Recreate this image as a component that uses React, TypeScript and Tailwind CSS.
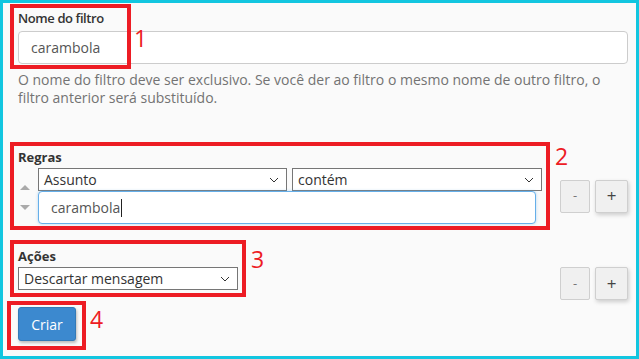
import React from "react";

const font = { fontFamily: '"Open Sans", "Noto Sans", sans-serif' };

function Chevron() {
  return (
    <svg width="10" height="6" viewBox="0 0 10 6" className="shrink-0">
      <path d="M1 1l4 4 4-4" fill="none" stroke="#333" strokeWidth="1" />
    </svg>
  );
}

function FakeSelect({ label, className }: { label: string; className: string }) {
  return (
    <div
      className={`flex h-[23px] items-center justify-between border border-[#767676] bg-white pl-[5px] pr-[7px] text-[14px] text-[#333] ${className}`}
    >
      <span className="leading-none">{label}</span>
      <Chevron />
    </div>
  );
}

function PlusMinus() {
  return (
    <div className="flex gap-[5px]">
      <button className="flex h-[33px] w-[30px] items-center justify-center rounded-[2px] border border-[#cfcfcf] bg-[#f0f0f0] text-[13px] text-[#777]">
        -
      </button>
      <button className="flex h-[33px] w-[33px] items-center justify-center rounded-[2px] border border-[#cfcfcf] bg-[#f0f0f0] text-[17px] text-[#444] shadow-[1px_2px_4px_rgba(0,0,0,0.18)]">
        +
      </button>
    </div>
  );
}

function Mark({ className }: { className: string }) {
  return <div className={`pointer-events-none absolute border-[4px] border-[#ed1c24] ${className}`} />;
}

function Num({ n, className }: { n: string; className: string }) {
  return (
    <div className={`absolute text-[23px] leading-none text-[#ed1c24] ${className}`}>{n}</div>
  );
}

export default function App() {
  return (
    <div
      className="relative h-[359px] w-[639px] overflow-hidden border-[3px] border-[#12c6e0] bg-[#fafafa]"
      style={font}
    >
      <div className="pl-[15px] pr-[8px] pt-[6px]">
        {/* Nome do filtro */}
        <div className="text-[13px] font-semibold leading-[18px] tracking-[-0.4px] text-[#333]">Nome do filtro</div>
        <div className="mt-[4px] flex h-[33px] items-center rounded-[4px] border border-[#ccc] bg-white pl-[12px] text-[14px] text-[#555]">
          carambola
        </div>
        <p className="mt-[7px] text-[14px] leading-[18px] text-[#737373]">
          O nome do filtro deve ser exclusivo. Se você der ao filtro o mesmo nome de outro filtro, o
          <br />
          filtro anterior será substituído.
        </p>

        {/* Regras */}
        <div className="mt-[41px] text-[13px] font-bold leading-[18px] text-[#333]">Regras</div>
        <div className="mt-[2px] flex items-center">
          <div className="flex w-[20px] flex-col gap-[15px] self-start pl-[2px] pt-[17px]">
            <div className="h-0 w-0 border-x-[5px] border-b-[5px] border-x-transparent border-b-[#aaa]" />
            <div className="h-0 w-0 border-x-[5px] border-t-[5px] border-x-transparent border-t-[#aaa]" />
          </div>
          <div className="flex w-[504px] flex-col">
            <div className="flex gap-[5px]">
              <FakeSelect label="Assunto" className="w-[249px]" />
              <FakeSelect label="contém" className="w-[250px]" />
            </div>
            <div className="flex h-[33px] w-[498px] items-center rounded-[4px] border border-[#66afe9] bg-white pl-[12px] text-[14px] text-[#555] shadow-[0_0_3px_rgba(102,175,233,0.5)]">
              carambola
              <span className="ml-[1px] h-[18px] w-px bg-[#222]" />
            </div>
          </div>
          <div className="ml-auto">
            <PlusMinus />
          </div>
        </div>

        {/* Ações */}
        <div className="mt-[23px] flex items-start">
          <div>
            <div className="text-[13px] font-bold leading-[18px] text-[#333]">Ações</div>
            <FakeSelect label="Descartar mensagem" className="mt-[2px] w-[220px]" />
          </div>
          <div className="ml-auto mt-[20px]">
            <PlusMinus />
          </div>
        </div>

        <button className="mt-[7px] h-[34px] w-[58px] rounded-[3px] border border-[#337ab7] bg-[#3c89cf] text-[14px] text-white shadow-[1px_2px_3px_rgba(0,0,0,0.25)]">
          Criar
        </button>
      </div>

      {/* annotations */}
      <Mark className="left-[7px] top-[1px] h-[65px] w-[121px]" />
      <Num n="1" className="left-[131px] top-[24px]" />
      <Mark className="left-[7px] top-[139px] h-[88px] w-[540px]" />
      <Num n="2" className="left-[552px] top-[142px]" />
      <Mark className="left-[7px] top-[237px] h-[57px] w-[236px]" />
      <Num n="3" className="left-[248px] top-[245px]" />
      <Mark className="left-[4px] top-[298px] h-[49px] w-[79px]" />
      <Num n="4" className="left-[87px] top-[305px]" />
    </div>
  );
}
